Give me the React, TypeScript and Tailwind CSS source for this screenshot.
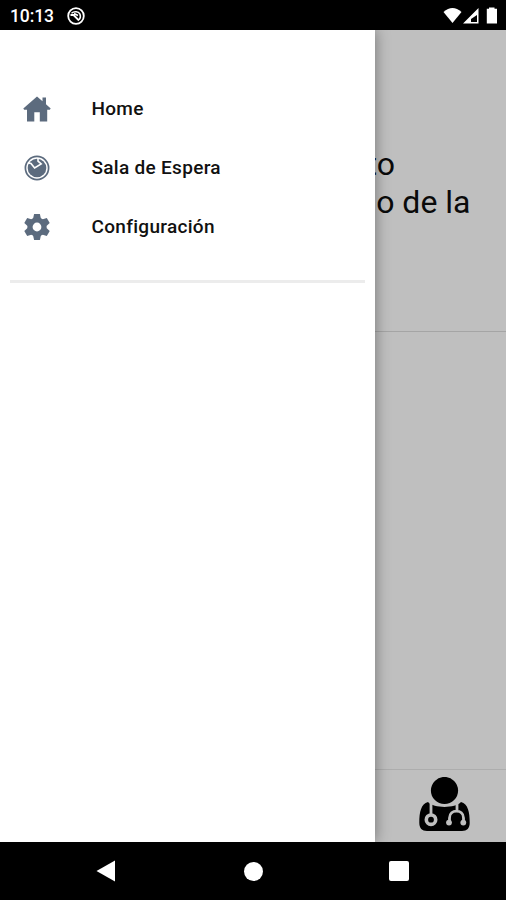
function HomeIcon() {
  return (
    <svg width="28" height="26" viewBox="0 0 28 26" fill="#5c6b7e">
      <path d="M14 0.5 L19.5 5.3 V1.5 H23 V8.3 L27.7 12.5 L26.8 13.8 H24.2 V25.5 H16.8 V16.3 H11.3 V25.5 H4 V13.8 H1.2 L0.3 12.5 Z" />
    </svg>
  );
}

function WaitIcon() {
  return (
    <svg width="26" height="26" viewBox="0 0 26 26" fill="none">
      <circle cx="13" cy="13" r="11.6" stroke="#5c6b7e" strokeWidth="1.7" />
      <circle cx="13" cy="13" r="9.3" fill="#5c6b7e" />
      <path d="M3.8 7.8 L7 8.5 L10.6 13 L17.2 9 L14 6.2 V3" stroke="#fff" strokeWidth="1.6" />
    </svg>
  );
}

function GearIcon() {
  return (
    <svg width="26" height="26" viewBox="-13 -13 26 26" fill="#5c6b7e">
      <circle r="9.7" />
      {[0, 60, 120].map((angle) => (
        <path
          key={angle}
          transform={`rotate(${angle})`}
          d="M-2.9 -13 H2.9 L4 -8 V8 L2.9 13 H-2.9 L-4 8 V-8 Z"
        />
      ))}
      <circle r="4.4" fill="#fff" />
    </svg>
  );
}

function DoctorIcon() {
  return (
    <svg width="51" height="54" viewBox="0 0 51 54" fill="none" stroke="#bfbfbf">
      <path
        d="M9 25 C15 31.5 36 31.5 42 25 C49 27 50.7 35 50.7 46 C50.7 51 48 54 43 54 H8 C3 54 0.3 51 0.3 46 C0.3 35 2 27 9 25 Z"
        fill="#000"
        stroke="none"
      />
      <circle cx="25.5" cy="13.5" r="13.6" fill="#000" stroke="none" />
      <path d="M12 24 V38" strokeWidth="2.8" />
      <circle cx="12" cy="42.7" r="4.7" strokeWidth="3.6" />
      <path d="M38 24 V34 M30.5 45 V41 C30.5 31.8 44.5 31.8 44.5 41 V45" strokeWidth="2.8" />
      <circle cx="30" cy="45.6" r="2.9" fill="#bfbfbf" stroke="none" />
      <circle cx="44.3" cy="45.6" r="2.9" fill="#bfbfbf" stroke="none" />
    </svg>
  );
}

function StatusIcon() {
  return (
    <svg width="18" height="18" viewBox="0 0 18 18" fill="none" stroke="#fff">
      <circle cx="9" cy="9" r="7.8" strokeWidth="1.8" />
      <path d="M4.5 6.2 C7 4 11.5 4.2 13 7.2 C13.8 9.5 13.3 11.5 12 12.8" strokeWidth="1.5" />
      <path d="M3.5 8 H6.5 L12 13.5 M7 6.5 L11 8.5" strokeWidth="1.8" />
    </svg>
  );
}

const items = [
  { label: "Home", icon: <HomeIcon /> },
  { label: "Sala de Espera", icon: <WaitIcon /> },
  { label: "Configuración", icon: <GearIcon /> },
];

function StatusBar() {
  return (
    <header className="flex h-[30px] shrink-0 items-center bg-black pt-px pr-2 pl-2.5 text-white">
      <span className="w-[57px] pt-0.5 text-[17.5px] leading-none font-medium tracking-[-0.1px]">
        10:13
      </span>
      <StatusIcon />
      <svg className="ml-auto" width="55" height="18" viewBox="0 0 55 18" fill="#fff">
        <path d="M0.5 5 Q9.5 -3 18.5 5 L9.5 16 Z" />
        <path fillRule="evenodd" d="M20 16.5 L35.5 1 V16.5 Z M28 15 H34 V8 L28 12 Z" />
        <path d="M46 0.5 H51.5 V1.8 H54 V16.5 H43.8 V1.8 H46 Z" />
      </svg>
    </header>
  );
}

function Drawer() {
  return (
    <aside className="absolute inset-y-0 left-0 w-[375px] bg-white shadow-[0_0_14px_rgba(0,0,0,0.4)]">
      <nav className="flex flex-col pt-[50px]">
        {items.map((item) => (
          <a key={item.label} className="flex h-[59px] items-center">
            <span className="flex w-[74px] justify-center pb-0.5">{item.icon}</span>
            <span className="pl-[17.5px] text-[19px] font-medium tracking-[0.3px] text-[#111]">
              {item.label}
            </span>
          </a>
        ))}
      </nav>
      <div className="mx-2.5 mt-[23px] h-[3px] bg-[#ececec]" />
    </aside>
  );
}

export default function App() {
  return (
    <div
      className="flex h-[900px] w-[506px] flex-col overflow-hidden bg-black"
      style={{ fontFamily: "Roboto, sans-serif" }}
    >
      <StatusBar />
      <main className="relative flex h-[812px] shrink-0 flex-col overflow-hidden bg-[#bfbfbf]">
        <section className="h-[302px] border-b border-[#a5a5a5] pt-[115px] text-[32px] leading-[38px] font-[450] text-[#0a0a0a]">
          <p className="w-[395px] text-right">to</p>
          <p className="w-[470.5px] text-right">o de la</p>
        </section>
        <div className="flex-1" />
        <footer className="flex h-[73px] justify-end border-t border-[#adadad] pt-[7px] pr-[36px]">
          <DoctorIcon />
        </footer>
        <Drawer />
      </main>
      <footer className="flex flex-1 items-center pl-24">
        <svg width="20" height="22" viewBox="0 0 20 22" fill="#fff">
          <path d="M0.5 11 L19 0.5 V21.5 Z" />
        </svg>
        <span className="ml-[128px] size-[19px] rounded-full bg-white" />
        <span className="ml-[126px] size-5 rounded-[2px] bg-white" />
      </footer>
    </div>
  );
}
